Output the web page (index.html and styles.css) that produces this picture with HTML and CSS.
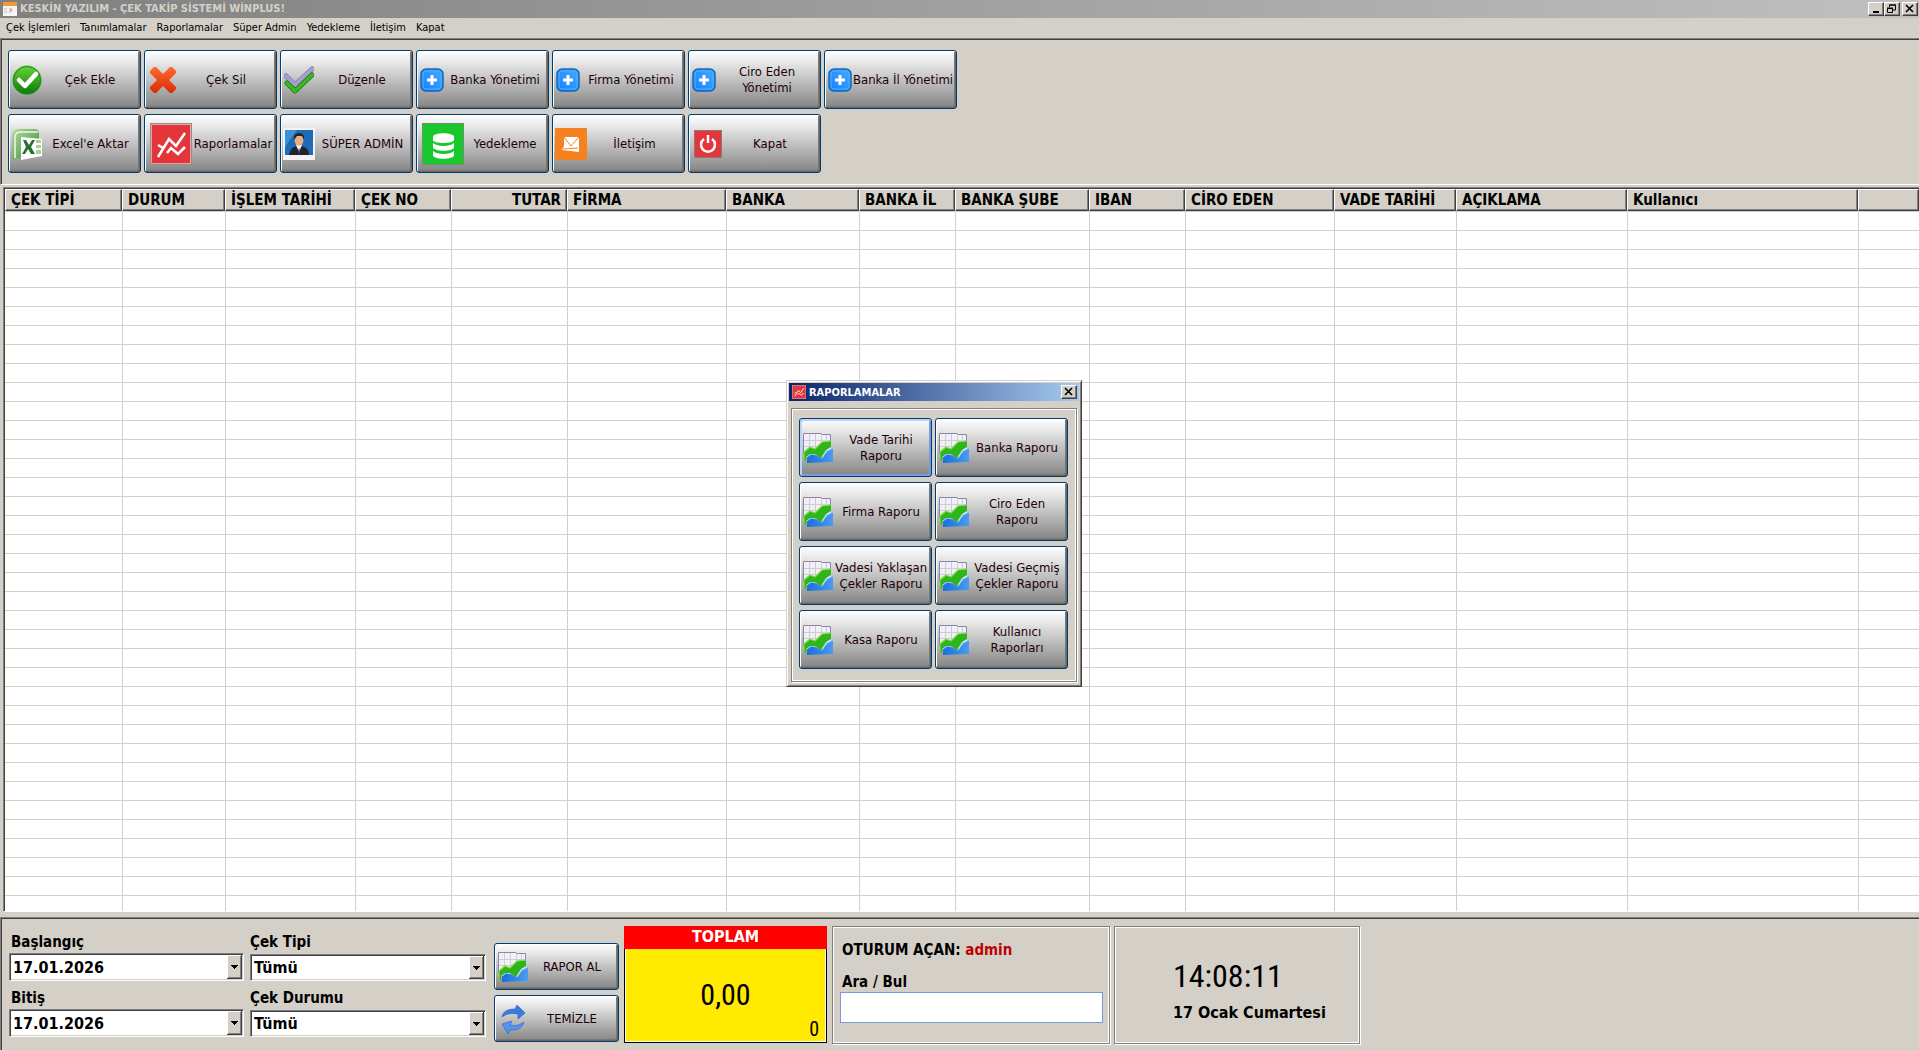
FILE: index.html
```html
<!DOCTYPE html>
<html lang="tr">
<head>
<meta charset="utf-8">
<title>Çek Takip Sistemi</title>
<link rel="stylesheet" href="styles.css">
</head>
<body>
<svg class="defs" aria-hidden="true">
  <defs>
    <linearGradient id="g-green" x1="0" y1="0" x2="0" y2="1"><stop offset="0" stop-color="#6cd43c"/><stop offset="1" stop-color="#067a06"/></linearGradient>
    <linearGradient id="g-orange" x1="0" y1="0" x2="0" y2="1"><stop offset="0" stop-color="#ff6a2a"/><stop offset="1" stop-color="#dc2a06"/></linearGradient>
    <linearGradient id="g-blue" x1="0" y1="0" x2="1" y2="0"><stop offset="0" stop-color="#1a6fd8"/><stop offset="1" stop-color="#4a9df0"/></linearGradient>
    <linearGradient id="g-plus" x1="0" y1="1" x2="1" y2="0"><stop offset="0" stop-color="#1482ff"/><stop offset="1" stop-color="#48a8ff"/></linearGradient>
    <linearGradient id="g-leaf" x1="0" y1="0" x2="1" y2="1"><stop offset="0" stop-color="#b4dc9c"/><stop offset="1" stop-color="#3c8a34"/></linearGradient>
  </defs>
  <symbol id="chart" viewBox="0 0 30 30">
    <path d="M0.500 0.500H18L19 1.500H27.500V24H0.500Z" fill="#f1f0f6"/>
    <path d="M0 7.500H27M0 13.500H27M0 19.500H27M6.500 1V26M12.500 1V26M18.500 1V26M23.500 1V26" stroke="#cdcbdc" fill="none"/>
    <path d="M0.500 22V0.500H18L19 1.500H27.500V10" fill="none" stroke="#8c88a0"/>
    <path d="M4 24L8 21L14 22L19 25L24 18L30 15V29L4 30Z" fill="url(#g-blue)"/>
    <path d="M4 24L8 21L14 22L19 25L24 18L30 15" fill="none" stroke="#9cd0ff"/>
    <path d="M1 19L7 14L12 16L19 9H23L28 8V14L23 17L18 25L12 21L7 21L3 24V28H1Z" fill="#30b41c"/>
    <path d="M1 28V19L7 14L12 16L19 9L28 8" fill="none" stroke="#78e040" stroke-width="1.200"/>
  </symbol>
  <symbol id="plus" viewBox="0 0 24 24">
    <rect x="1" y="1" width="22" height="22" rx="5" fill="url(#g-plus)" stroke="#1468b8" stroke-width="1.500"/>
    <rect x="3" y="3" width="18" height="18" rx="3" fill="none" stroke="#50acff" stroke-width="1"/>
    <path d="M12 7V17M7 12H17" stroke="#fff" stroke-width="3"/>
  </symbol>
  <symbol id="graph" viewBox="0 0 42 42">
    <rect width="42" height="42" fill="#909090"/>
    <rect x="1" y="1" width="40" height="40" fill="#e8a0a0"/>
    <rect x="2" y="2" width="38" height="38" fill="#e4353a"/>
    <path d="M8 34L19 16L26 23L35 10" fill="none" stroke="#fff" stroke-width="2.500"/>
    <path d="M8 22L13 25M17 30L21 25L28 31L35 24" fill="none" stroke="#fff" stroke-width="2.500"/>
  </symbol>
</svg>

<header class="titlebar">
  <svg class="app-icon" viewBox="0 0 14 14"><rect width="14" height="14" fill="#f4f4f6"/><rect width="14" height="4" fill="#f29a30"/><path d="M1 7H4M6 7H9M1 10H4M6 10H8" stroke="#d4d4dc" stroke-width="2"/><circle cx="8" cy="8" r="1.500" fill="#e8a898"/></svg>
  <h1 class="title">KESKİN YAZILIM - ÇEK TAKİP SİSTEMİ WİNPLUS!</h1>
  <div class="winbuttons">
    <button class="winbtn" aria-label="Simge durumuna küçült"><svg viewBox="0 0 12 10"><path d="M3 8H9" stroke="#000" stroke-width="2"/></svg></button>
    <button class="winbtn" aria-label="Önceki boyut"><svg viewBox="0 0 12 10"><path d="M3.500 3V1H9.500V6H7M3 1H10M1.500 4.500H6.500V8.500H1.500ZM1 4H7" fill="none" stroke="#000"/></svg></button>
    <button class="winbtn close" aria-label="Kapat"><svg viewBox="0 0 12 10"><path d="M2 1L9 8M9 1L2 8" stroke="#000" stroke-width="1.600"/></svg></button>
  </div>
</header>

<nav class="menu">
  <a href="#">Çek İşlemleri</a><a href="#">Tanımlamalar</a><a href="#">Raporlamalar</a><a href="#">Süper Admin</a><a href="#">Yedekleme</a><a href="#">İletişim</a><a href="#">Kapat</a>
</nav>

<section class="toolbar">
  <button class="btn"><svg class="ico" viewBox="0 0 30 30"><circle cx="15" cy="15" r="14.500" fill="url(#g-green)"/><circle cx="15" cy="15" r="13.500" fill="none" stroke="#1c8a14"/><path d="M7 15L13 21L24 9" fill="none" stroke="#fff" stroke-width="4.500" stroke-linecap="round" stroke-linejoin="round"/></svg><span>Çek Ekle</span></button>
  <button class="btn"><svg class="ico" viewBox="0 0 30 30"><path d="M2 6L6 2H8L15 9L22 2H24L28 6V8L21 15L28 22V24L24 28H22L15 21L8 28H6L2 24V22L9 15L2 8Z" fill="url(#g-orange)"/></svg><span>Çek Sil</span></button>
  <button class="btn"><svg class="ico" viewBox="0 0 30 30"><path d="M2 11L11 20L28 4" fill="none" stroke="#7770a8" stroke-width="5" stroke-linejoin="round" stroke-linecap="round"/><path d="M2 11L11 20L28 4" fill="none" stroke="#a49fd0" stroke-width="4" stroke-linejoin="round" stroke-linecap="round"/><path d="M3 18L11 26L28 10" fill="none" stroke="#18780c" stroke-width="5" stroke-linejoin="round" stroke-linecap="round"/><path d="M3 18L11 26L28 10" fill="none" stroke="#3cb820" stroke-width="3.500" stroke-linejoin="round" stroke-linecap="round"/></svg><span>Dü<u>z</u>enle</span></button>
  <button class="btn"><svg class="ico i24"><use href="#plus"/></svg><span>Banka Yönetimi</span></button>
  <button class="btn"><svg class="ico i24"><use href="#plus"/></svg><span>Firma Yönetimi</span></button>
  <button class="btn"><svg class="ico i24"><use href="#plus"/></svg><span>Ciro Eden Yönetimi</span></button>
  <button class="btn"><svg class="ico i24"><use href="#plus"/></svg><span>Banka İl Yönetimi</span></button>
  <button class="btn row2"><svg class="ico i32" viewBox="0 0 32 32"><path d="M1 30V8Q1 1 9 1H24Q28 1 28 6V28L1 31Z" fill="url(#g-leaf)"/><path d="M4 30V9Q4 4 10 4H27" fill="none" stroke="#eef8ea" stroke-width="1.500"/><path d="M10 9L31 11V28L10 32Z" fill="#fff"/><path d="M12 12L15 12L18 17L21 12H24L20 19L24 26H20L17 21L14 26H11L15 19Z" fill="#2c7030"/><path d="M25 12H30V15H25ZM25 17H30V20H25ZM25 22H30V26H25Z" fill="#a8d098"/></svg><span>Excel'e Aktar</span></button>
  <button class="btn"><svg class="ico i42"><use href="#graph"/></svg><span>Raporlamalar</span></button>
  <button class="btn"><svg class="ico i32" viewBox="0 0 32 32"><rect width="32" height="32" fill="#f2f2f4"/><rect x="2" y="2" width="28" height="25" fill="#1e6cb8"/><path d="M2 2H14L4 16L2 20Z" fill="#3c90d8"/><path d="M6 27Q7 18 16 18Q26 18 26 27Z" fill="#20242c"/><path d="M13 17L16 24L19 17Z" fill="#fff"/><ellipse cx="16" cy="12" rx="4.500" ry="6" fill="#e4b088"/><path d="M11 12Q10 5 16 5Q22 5 21 12L19 8H14Z" fill="#2c2420"/><path d="M16 19L17 24L16 26L15 24Z" fill="#444"/></svg><span>SÜPER ADMİN</span></button>
  <button class="btn"><svg class="ico i42" viewBox="0 0 42 42"><rect width="42" height="42" fill="#6c9070"/><rect x="1" y="1" width="40" height="40" fill="#18c82c"/><path d="M11 14C11 9 32 9 32 14V17C32 21 11 21 11 17ZM11 20C15 24 28 24 32 20V24C32 29 11 29 11 24ZM11 28C15 32 28 32 32 28V32C32 37 11 37 11 32Z" fill="#fff"/></svg><span>Yedekleme</span></button>
  <button class="btn"><svg class="ico i32" viewBox="0 0 32 32"><rect width="32" height="32" fill="#f58220"/><path d="M9 9H24V24L7 22L9 18Z" fill="#fff"/><path d="M9 9L16 18L24 9M8 21L23 20" fill="none" stroke="#f58220"/></svg><span>İletişim</span></button>
  <button class="btn"><svg class="ico i28" viewBox="0 0 28 28"><rect width="28" height="28" fill="#8c7878"/><rect x="1" y="1" width="26" height="26" fill="#e4353a"/><path d="M10 9A7 7 0 1 0 18 9" fill="none" stroke="#fff" stroke-width="2.500"/><path d="M14 5V13" stroke="#fff" stroke-width="2.500"/></svg><span>Kapat</span></button>
</section>

<main class="list">
  <table class="grid">
    <colgroup><col class="c117"><col class="c103"><col class="c130"><col class="c96"><col class="c116"><col class="c159"><col class="c133"><col class="c96"><col class="c134"><col class="c96"><col class="c149"><col class="c122"><col class="c171"><col class="c231"><col></colgroup>
    <thead><tr><th>ÇEK TİPİ</th><th>DURUM</th><th>İŞLEM TARİHİ</th><th>ÇEK NO</th><th class="num">TUTAR</th><th>FİRMA</th><th>BANKA</th><th>BANKA İL</th><th>BANKA ŞUBE</th><th>IBAN</th><th>CİRO EDEN</th><th>VADE TARİHİ</th><th>AÇIKLAMA</th><th>Kullanıcı</th><th></th></tr></thead>
    <tbody><tr><td></td><td></td><td></td><td></td><td></td><td></td><td></td><td></td><td></td><td></td><td></td><td></td><td></td><td></td><td></td></tr></tbody>
  </table>
</main>

<footer class="bottom">
  <form class="filters">
    <div class="field date"><label for="bas">Başlangıç</label><select id="bas"><option>17.01.2026</option></select></div>
    <div class="field"><label for="tip">Çek Tipi</label><select id="tip"><option>Tümü</option></select></div>
    <div class="field date"><label for="bit">Bitiş</label><select id="bit"><option>17.01.2026</option></select></div>
    <div class="field"><label for="dur">Çek Durumu</label><select id="dur"><option>Tümü</option></select></div>
  </form>
  <div class="actions">
    <button class="btn small"><svg class="ico"><use href="#chart"/></svg><span>RAPOR AL</span></button>
    <button class="btn small"><svg class="ico" viewBox="0 0 30 30"><path d="M4 13Q5 5 17 5L19 1L27 9L20 15V10Q10 8 4 13Z" fill="#3c7ce0" stroke="#2458b8" stroke-width=".6"/><path d="M26 18Q24 27 12 26L10 30L4 20L14 17L12 21Q20 23 26 18Z" fill="#5494f0" stroke="#2c62c4" stroke-width=".6"/></svg><span>TEMİZLE</span></button>
  </div>
  <section class="total">
    <h2>TOPLAM</h2>
    <div class="sums"><p class="amount">0,00</p><p class="count">0</p></div>
  </section>
  <section class="session">
    <p>OTURUM AÇAN: <b class="user">admin</b></p>
    <label for="ara">Ara / Bul</label>
    <input id="ara" type="text">
  </section>
  <section class="clock">
    <p class="time">14:08:11</p>
    <p>17 Ocak Cumartesi</p>
  </section>
</footer>

<div class="dialog" role="dialog" aria-labelledby="dlg-title">
  <div class="dlg-bar">
    <svg class="app-icon"><use href="#graph"/></svg>
    <h2 id="dlg-title">RAPORLAMALAR</h2>
    <button class="winbtn" aria-label="Kapat"><svg viewBox="0 0 12 10"><path d="M2 1L9 8M9 1L2 8" stroke="#000" stroke-width="1.600"/></svg></button>
  </div>
  <div class="dlg-body">
    <button class="btn focus"><svg class="ico"><use href="#chart"/></svg><span>Vade Tarihi Raporu</span></button>
    <button class="btn"><svg class="ico"><use href="#chart"/></svg><span>Banka Raporu</span></button>
    <button class="btn"><svg class="ico"><use href="#chart"/></svg><span>Firma Raporu</span></button>
    <button class="btn"><svg class="ico"><use href="#chart"/></svg><span>Ciro Eden Raporu</span></button>
    <button class="btn"><svg class="ico"><use href="#chart"/></svg><span>Vadesi Yaklaşan Çekler Raporu</span></button>
    <button class="btn"><svg class="ico"><use href="#chart"/></svg><span>Vadesi Geçmiş Çekler Raporu</span></button>
    <button class="btn"><svg class="ico"><use href="#chart"/></svg><span>Kasa Raporu</span></button>
    <button class="btn"><svg class="ico"><use href="#chart"/></svg><span>Kullanıcı Raporları</span></button>
  </div>
</div>
</body>
</html>
```
FILE: styles.css
```css
* { box-sizing: border-box; }
body {
  margin: 0;
  min-height: 100vh;
  display: flex;
  flex-direction: column;
  background: #d4d0c8;
  color: #000;
  font-family: "DejaVu Sans Condensed", "DejaVu Sans", sans-serif;
  font-size: 13px;
  overflow: hidden;
}
h1, h2, p { margin: 0; font-size: inherit; }
button, select, input { font-family: inherit; }
.defs { position: absolute; width: 0; height: 0; }

.titlebar {
  display: flex;
  align-items: center;
  gap: 3px;
  height: 18px;
  padding: 0 1px 0 3px;
  background: linear-gradient(90deg, #808080, #c0c0c0);
}
.app-icon { width: 14px; height: 14px; flex: none; }
.title { flex: 1; font-size: 11px; line-height: 18px; color: #d4d0c8; }
.winbuttons { display: flex; }
.winbtn {
  width: 16px;
  height: 14px;
  padding: 0;
  display: flex;
  background: #d4d0c8;
  border: 1px solid;
  border-color: #fff #404040 #404040 #fff;
  box-shadow: inset -1px -1px #808080;
}
.winbtn svg { width: 12px; height: 10px; margin: 1px; }
.winbtn.close { margin-left: 2px; }

.menu { display: flex; gap: 10px; height: 20px; padding-left: 6px; font-size: 11px; line-height: 20px; }
.menu a { color: inherit; text-decoration: none; }

.toolbar {
  display: grid;
  grid-template-columns: repeat(7, 133px);
  gap: 5px 3px;
  padding: 11px 7px;
  border: 1px solid #808080;
  border-right: 0;
  border-bottom-color: #fff;
  box-shadow: inset 1px 1px #404040;
}
.row2 { grid-column: 1; }
.btn {
  display: flex;
  align-items: center;
  height: 59px;
  padding: 0 2px;
  border: 1px solid #003c74;
  border-radius: 3px;
  background: linear-gradient(#fff, #e8e8e8 20%, #848484);
  box-shadow: inset 1px 1px #fff, inset -1px -1px #6c6660, inset -2px -2px #7c7874;
  color: #1c0008;
  font-size: 13px;
  line-height: 16px;
}
.btn span { flex: 1; text-align: center; padding-top: 1px; }
.btn.focus { box-shadow: inset 2px 2px #bcd4f6, inset -2px -2px #7a9ae0; }
.btn.small { height: 47px; }
.ico { width: 30px; height: 30px; flex: none; margin-left: 1px; }
.i24 { width: 24px; height: 24px; }
.i28 { width: 28px; height: 28px; margin-left: 3px; }
.i32 { width: 32px; height: 32px; margin-left: 0; }
.i42 { width: 42px; height: 42px; margin-left: 3px; }

.list {
  flex: 1;
  display: flex;
  margin: 2px 0 5px 3px;
  border: 1px solid #808080;
  border-right: 0;
  border-bottom-color: #fff;
  background: #fff;
  box-shadow: inset 1px 1px #404040;
  padding: 1px 0 0 1px;
}
.grid { width: 100%; table-layout: fixed; border-collapse: separate; border-spacing: 0; }
.c96 { width: 96px; } .c103 { width: 103px; } .c116 { width: 116px; } .c117 { width: 117px; }
.c122 { width: 122px; } .c130 { width: 130px; } .c133 { width: 133px; } .c134 { width: 134px; }
.c149 { width: 149px; } .c159 { width: 159px; } .c171 { width: 171px; } .c231 { width: 231px; }
.grid th {
  height: 22px;
  padding: 0 5px;
  background: #d4d0c8;
  border: 1px solid;
  border-color: #fff #404040 #404040 #fff;
  box-shadow: inset -1px -1px #808080;
  font-size: 15px;
  line-height: 20px;
  text-align: left;
  white-space: nowrap;
}
.grid .num { text-align: right; }
.grid tbody tr { background: repeating-linear-gradient(#d4d0c8 0 1px, #fff 1px 19px); }
.grid td { padding: 0; border-left: 1px solid #d4d0c8; }
.grid td:first-child { border-left: 0; }

.bottom {
  display: flex;
  align-items: flex-start;
  height: 133px;
  border: 1px solid #808080;
  border-width: 1px 0 0 1px;
  box-shadow: inset 1px 1px #404040;
  padding: 8px 8px 0;
  font-size: 15px;
  font-weight: bold;
}
.filters { display: grid; grid-template-columns: 235px 236px; gap: 7px 6px; padding-top: 6px; }
.field { display: flex; flex-direction: column; justify-content: space-between; }
.field label { line-height: 21px; }
.date label { padding-left: 2px; }
select {
  appearance: none;
  height: 27px;
  padding: 0 3px;
  border: 1px solid;
  border-color: #808080 #fff #fff #808080;
  border-radius: 0;
  box-shadow: inset 1px 1px #404040, inset -1px -1px #d4d0c8;
  color: #000;
  font-size: 16px;
  font-weight: bold;
  background:
    linear-gradient(#000, #000) right 8px top 11px / 1px 4px no-repeat,
    linear-gradient(#000, #000) right 7px top 11px / 3px 3px no-repeat,
    linear-gradient(#000, #000) right 6px top 11px / 5px 2px no-repeat,
    linear-gradient(#000, #000) right 5px top 11px / 7px 1px no-repeat,
    linear-gradient(#d4d0c8, #d4d0c8) right 3px top 2px / 12px calc(100% - 5px) no-repeat,
    linear-gradient(#808080, #808080) right 2px top 2px / 13px calc(100% - 4px) no-repeat,
    linear-gradient(#fff, #fff) right 2px top 1px / 14px calc(100% - 3px) no-repeat,
    linear-gradient(#404040, #404040) right 1px top 1px / 15px calc(100% - 2px) no-repeat,
    #fff;
}
.date select { height: 28px; }
.actions { display: grid; gap: 5px; width: 125px; margin: 17px 5px 0 8px; }
.total { width: 203px; height: 117px; border: 1px solid #000; background: #ffea00; box-shadow: inset 0 0 0 1px #fff; display: flex; flex-direction: column; }
.total h2 { margin: -1px -1px 0; height: 23px; line-height: 22px; background: #f00; color: #fff; font-size: 16px; text-align: center; }
.sums, .time { font-family: "Liberation Sans Narrow", "Roboto Condensed", "Liberation Sans", sans-serif; font-weight: normal; }
.sums { flex: 1; display: grid; }
.amount { font-size: 30px; line-height: 40px; text-align: center; padding-top: 26px; }
.count { font-size: 20px; line-height: 22px; text-align: right; padding-right: 7px; }
.session, .clock { border: 1px solid #808080; outline: 1px solid #fff; outline-offset: -2px; box-shadow: 1px 1px #fff; height: 118px; }
.session { width: 278px; margin: 0 4px 0 5px; padding: 13px 6px 0 7px; display: flex; flex-direction: column; }
.session p, .session label { line-height: 20px; padding-left: 2px; }
.session label { margin-top: 12px; }
.user { color: #c00000; }
.session input { height: 31px; border: 1px solid #7a96df; background: #fff; padding: 2px 6px; font-size: 15px; }
.clock { width: 246px; padding: 24px 0 0 58px; font-size: 16px; line-height: 24px; }
.time { font-size: 32px; line-height: 50px; }

.dialog {
  position: absolute;
  left: 786px;
  top: 380px;
  width: 296px;
  padding: 2px;
  background: #d4d0c8;
  border: 1px solid;
  border-color: #d4d0c8 #404040 #404040 #d4d0c8;
  box-shadow: inset 1px 1px #fff, inset -1px -1px #808080;
}
.dlg-bar { display: flex; align-items: center; gap: 3px; height: 18px; padding: 0 2px 0 3px; background: linear-gradient(90deg, #0a246a, #a6caf0); color: #fff; font-size: 11px; }
.dlg-bar h2 { flex: 1; }
.dlg-body {
  display: grid;
  grid-template-columns: repeat(2, 133px);
  gap: 5px 3px;
  margin: 7px 2px 2px;
  padding: 9px 7px 12px;
  border: 1px solid #808080;
  outline: 1px solid #fff;
  outline-offset: -2px;
  box-shadow: 1px 1px #fff;
}
```
